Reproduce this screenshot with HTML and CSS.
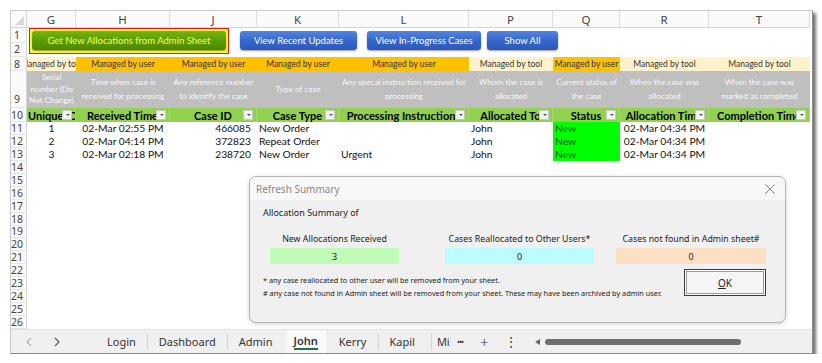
FILE: index.html
```html
<!DOCTYPE HTML>
<html>
<head>
    <meta name="viewport" content="width=device-width, initial-scale=1.0">
    <link rel="stylesheet" href="styles.css">
</head>
<body>
    <div class="window">
        <div class="sheet">
            <div class="corner"><span class="tri"></span></div>
            <div class="ch">G</div>
            <div class="ch">H</div>
            <div class="ch">J</div>
            <div class="ch">K</div>
            <div class="ch">L</div>
            <div class="ch">P</div>
            <div class="ch">Q</div>
            <div class="ch">R</div>
            <div class="ch">T</div>

            <div class="btnbar">
                <div class="hilite"><div class="btn green">Get New Allocations from Admin Sheet</div></div>
                <div class="btn blue b1">View Recent Updates</div>
                <div class="btn blue b2">View In-Progress Cases</div>
                <div class="btn blue b3">Show All</div>
            </div>
            <div class="rh">1</div>
            <div class="rh">2</div>

            <div class="rh">8</div>
            <div class="own tool"><span>Managed by tool</span></div>
            <div class="own user"><span>Managed by user</span></div>
            <div class="own user"><span>Managed by user</span></div>
            <div class="own user"><span>Managed by user</span></div>
            <div class="own user"><span>Managed by user</span></div>
            <div class="own tool"><span>Managed by tool</span></div>
            <div class="own user"><span>Managed by user</span></div>
            <div class="own tool"><span>Managed by tool</span></div>
            <div class="own tool"><span>Managed by tool</span></div>

            <div class="rh bottom">9</div>
            <div class="desc tight">Serial<br>number (Do<br>Not Change)</div>
            <div class="desc">Time when case is received for processing</div>
            <div class="desc">Any reference number to identify the case</div>
            <div class="desc">Type of case</div>
            <div class="desc">Any specal instruction received for processing</div>
            <div class="desc">Whom the case is allocated</div>
            <div class="desc">Current status of the case</div>
            <div class="desc">When the case was allocated</div>
            <div class="desc">When the case was<br>marked as completed</div>

            <div class="rh">10</div>
            <div class="head left"><span>Unique ID</span><i class="filter"></i></div>
            <div class="head"><span>Received Time</span><i class="filter"></i></div>
            <div class="head"><span>Case ID</span><i class="filter"></i></div>
            <div class="head"><span>Case Type</span><i class="filter"></i></div>
            <div class="head"><span>Processing Instructions</span><i class="filter"></i></div>
            <div class="head"><span>Allocated To</span><i class="filter"></i></div>
            <div class="head"><span>Status</span><i class="filter"></i></div>
            <div class="head"><span>Allocation Time</span><i class="filter"></i></div>
            <div class="head"><span>Completion Time</span><i class="filter"></i></div>

            <div class="rh">11</div>
            <div class="c mid">1</div>
            <div class="c mid">02-Mar 02:55 PM</div>
            <div class="c num">466085</div>
            <div class="c">New Order</div>
            <div class="c"></div>
            <div class="c">John</div>
            <div class="c new">New</div>
            <div class="c mid">02-Mar 04:34 PM</div>
            <div class="c"></div>

            <div class="rh">12</div>
            <div class="c mid">2</div>
            <div class="c mid">02-Mar 04:14 PM</div>
            <div class="c num">372823</div>
            <div class="c">Repeat Order</div>
            <div class="c"></div>
            <div class="c">John</div>
            <div class="c new">New</div>
            <div class="c mid">02-Mar 04:34 PM</div>
            <div class="c"></div>

            <div class="rh">13</div>
            <div class="c mid">3</div>
            <div class="c mid">02-Mar 02:18 PM</div>
            <div class="c num">238720</div>
            <div class="c">New Order</div>
            <div class="c">Urgent</div>
            <div class="c">John</div>
            <div class="c new">New</div>
            <div class="c mid">02-Mar 04:34 PM</div>
            <div class="c"></div>

            <div class="rh">14</div><div class="blank"></div>
            <div class="rh">15</div><div class="blank"></div>
            <div class="rh">16</div><div class="blank"></div>
            <div class="rh">17</div><div class="blank"></div>
            <div class="rh">18</div><div class="blank"></div>
            <div class="rh">19</div><div class="blank"></div>
            <div class="rh">20</div><div class="blank"></div>
            <div class="rh">21</div><div class="blank"></div>
            <div class="rh">22</div><div class="blank"></div>
            <div class="rh">23</div><div class="blank"></div>
            <div class="rh">24</div><div class="blank"></div>
            <div class="rh">25</div><div class="blank"></div>
            <div class="rh">26</div><div class="blank"></div>
        </div>

        <div class="tabs">
            <span class="nav prev"><svg width="8" height="10" viewBox="0 0 8 10"><path d="M6 1 L2 5 L6 9" fill="none" stroke="#b0b0b0" stroke-width="1.1"/></svg></span>
            <span class="nav next"><svg width="8" height="10" viewBox="0 0 8 10"><path d="M2 1 L6 5 L2 9" fill="none" stroke="#555" stroke-width="1.1"/></svg></span>
            <span class="tab t-login">Login</span>
            <span class="tab t-dash">Dashboard</span>
            <span class="tab t-admin">Admin</span>
            <span class="tab active"><b>John</b></span>
            <span class="tab t-kerry">Kerry</span>
            <span class="tab t-kapil">Kapil</span>
            <span class="tab t-mike"><span>Mike</span></span>
            <span class="more">&bull;&bull;&bull;</span>
            <span class="plus">+</span>
            <span class="vdots">&#8942;</span>
            <span class="arrow"></span>
            <span class="thumb"></span>
        </div>

        <div class="dialog">
            <div class="title">
                <span>Refresh Summary</span>
                <svg class="close" width="10" height="10" viewBox="0 0 10 10"><path d="M0.5 0.5 L9.5 9.5 M9.5 0.5 L0.5 9.5" stroke="#777" stroke-width="0.9"/></svg>
            </div>
            <div class="dbody">
                <div class="lead">Allocation Summary of</div>
                <div class="stats">
                    <div class="stat s1"><div class="label">New Allocations Received</div><div class="val g">3</div></div>
                    <div class="stat s2"><div class="label">Cases Reallocated to Other Users*</div><div class="val c2">0</div></div>
                    <div class="stat s3"><div class="label">Cases not found in Admin sheet#</div><div class="val o">0</div></div>
                </div>
                <div class="foot">
                    <div class="notes">
                        <p>* any case reallocated to other user will be removed from your sheet.</p>
                        <p># any case not found in Admin sheet will be removed from your sheet. These may have been archived by admin user.</p>
                    </div>
                    <div class="ok"><u>O</u>K</div>
                </div>
            </div>
        </div>
    </div>
</body>
</html>
```

FILE: styles.css
```css
* {
    padding: 0;
    margin: 0;
    box-sizing: border-box;
}
body {
    background: #fff;
    font-family: Lato, "Liberation Sans", sans-serif;
}
.window {
    position: relative;
    margin: 10px 0 0 10px;
    width: 803px;
    height: 344px;
    border: 1px solid #c9c9c9;
    border-right-color: #8a8a8a;
    border-bottom-color: #8a8a8a;
    background: #fff;
    box-shadow: 3px 3px 3px rgba(0, 0, 0, 0.55);
    overflow: hidden;
}
.sheet {
    display: grid;
    grid-template-columns: 16px 49px 94px 87px 82px 130px 84px 67px 89px 101px;
    grid-template-rows: 17px 14.5px 14.5px 14px 37px 14px repeat(16, 12.94px);
    height: 318px;
    overflow: hidden;
}
.corner {
    position: relative;
    border-right: 1px solid #d4d4d4;
    border-bottom: 1px solid #d4d4d4;
    background: #fafafa;
}
.tri {
    position: absolute;
    right: 2px;
    bottom: 2px;
    width: 0;
    height: 0;
    border-left: 9px solid transparent;
    border-bottom: 9px solid #d8d8d8;
}
.ch {
    display: flex;
    align-items: center;
    justify-content: center;
    font-size: 11.5px;
    color: #444;
    background: #fafafa;
    border-right: 1px solid #dedede;
    border-bottom: 1px solid #d4d4d4;
    font-family: "Noto Sans", sans-serif;
}
.rh {
    grid-column: 1;
    display: flex;
    align-items: center;
    justify-content: center;
    padding-right: 3px;
    font-size: 10.5px;
    color: #444;
    background: #fafafa;
    border-right: 1px solid #d4d4d4;
    border-bottom: 1px solid #e6e6e6;
    font-family: "Noto Sans", sans-serif;
}
.rh.bottom {
    align-items: flex-end;
    padding-bottom: 1px;
}

/* floating macro buttons over rows 1-2 */
.btnbar {
    grid-column: 2 / -1;
    grid-row: 2 / span 2;
    display: flex;
    align-items: flex-start;
    padding: 0 0 0 2px;
}
.hilite {
    width: 200px;
    height: 26px;
    border: 1.5px solid #e8141b;
    background: #f7f73c;
    padding: 2px 2px 3px 2px;
}
.btn {
    display: flex;
    align-items: center;
    justify-content: center;
    font-size: 9.5px;
    border-radius: 3px;
    white-space: nowrap;
}
.green {
    height: 100%;
    color: #f4ff4a;
    background: linear-gradient(#74b312, #5a9a05 55%, #4c8800);
    box-shadow: 0 1px 1px rgba(0, 0, 0, 0.35);
}
.blue {
    height: 19px;
    margin-top: 3px;
    color: #fff;
    background: linear-gradient(#5085e3, #3565cb 55%, #2c58b8);
    box-shadow: 0 1px 2px rgba(0, 0, 0, 0.4);
}
.b1 { width: 117px; margin-left: 11px; }
.b2 { width: 114px; margin-left: 10px; }
.b3 { width: 71px; margin-left: 6px; }

/* row 8: who owns the column */
.own {
    display: flex;
    align-items: center;
    justify-content: center;
    overflow: hidden;
    white-space: nowrap;
    font-size: 8.5px;
    color: #333;
}
.own.user { background: #ffc000; }
.own.tool { background: #fff2cc; }

/* row 9: column description */
.desc {
    display: flex;
    align-items: center;
    justify-content: center;
    text-align: center;
    padding: 0 2px;
    background: #bfbfbf;
    color: #f7f7f7;
    font-size: 8.2px;
    line-height: 13.4px;
}
.desc.tight {
    line-height: 11.8px;
    padding: 0;
}

/* row 10: table header */
.head {
    position: relative;
    display: flex;
    align-items: center;
    justify-content: center;
    overflow: hidden;
    white-space: nowrap;
    background: #92d050;
    font-weight: bold;
    font-size: 11px;
    color: #000;
    border-right: 1px solid #a6da70;
}
.head.left {
    justify-content: flex-start;
    padding-left: 1px;
}
.filter {
    position: absolute;
    right: 3px;
    top: 2px;
    width: 10px;
    height: 10px;
    background: #f4f4f4;
    border: 1px solid #c8c8c8;
}
.filter::after {
    content: "";
    position: absolute;
    left: 2.5px;
    top: 3px;
    border-left: 2px solid transparent;
    border-right: 2px solid transparent;
    border-top: 2.5px solid #555;
}

/* data rows */
.c {
    display: flex;
    align-items: center;
    padding-left: 2px;
    white-space: nowrap;
    overflow: visible;
    font-size: 10.3px;
    color: #111;
}
.c.mid { justify-content: center; padding-left: 0; }
.c.num { justify-content: flex-end; padding-right: 6px; }
.c.new {
    background: #00ff00;
    color: #0b5a0b;
}
.blank {
    grid-column: 2 / -1;
}

/* sheet tabs */
.tabs {
    display: flex;
    align-items: center;
    height: 24px;
    background: #f0f0f0;
    border-top: 1px solid #e2e2e2;
    font-family: "Noto Sans", sans-serif;
    font-size: 11px;
    color: #333;
}
.nav {
    display: flex;
    align-items: center;
}
.prev { margin-left: 14px; }
.next { margin-left: 20px; }
.tab {
    display: flex;
    align-items: center;
    height: 16px;
    padding: 0 11px;
    border-left: 1px solid #d6d6d6;
}
.t-login { margin-left: 35px; border-left: none; }
.t-admin { padding-right: 14px; }
.active {
    height: 23px;
    margin-left: 0;
    padding: 0 8px 0 7px;
    background: #fafafa;
    border-left: none;
    position: relative;
}
.active b {
    font-weight: 600;
    border-bottom: 2px solid #217346;
    line-height: 14px;
}
.t-kerry { border-left: none; padding: 0 12px 0 13px; }
.t-kapil { padding: 0 16px 0 10px; }
.t-mike {
    width: 19px;
    overflow: hidden;
    padding: 0 0 0 5px;
    white-space: nowrap;
}
.more {
    font-size: 8px;
    margin-left: 7px;
    letter-spacing: -1px;
}
.plus {
    font-size: 15px;
    margin-left: 17px;
    font-weight: 300;
}
.vdots {
    font-size: 12px;
    margin-left: 17px;
}
.arrow {
    margin-left: 18px;
    width: 0;
    height: 0;
    border-top: 3px solid transparent;
    border-bottom: 3px solid transparent;
    border-right: 5px solid #666;
}
.thumb {
    margin-left: 5px;
    width: 196px;
    height: 6px;
    border-radius: 3px;
    background: #6f6f6f;
}

/* refresh dialog floats over the sheet */
.dialog {
    position: absolute;
    left: 238px;
    top: 165px;
    width: 537px;
    height: 147px;
    border: 1px solid #b5b5b5;
    border-radius: 7px;
    background: #f0f0f0;
    box-shadow: 0 1px 4px rgba(0, 0, 0, 0.18);
    font-family: "Noto Sans", sans-serif;
    color: #222;
    overflow: hidden;
}
.title {
    display: flex;
    align-items: center;
    justify-content: space-between;
    height: 23px;
    padding: 0 10px 0 6px;
    background: #f8f8f8;
    font-size: 10px;
    color: #8a8a8a;
}
.close { margin-top: 1px; }
.dbody {
    padding: 6px 0 0 13px;
}
.lead {
    font-size: 9px;
    line-height: 14px;
}
.stats {
    display: flex;
    margin-top: 12px;
}
.stat {
    display: flex;
    flex-direction: column;
    align-items: center;
}
.s1 { width: 129px; margin-left: 7px; }
.s2 { width: 149px; margin-left: 46px; }
.s3 { width: 150px; margin-left: 22px; }
.label {
    font-size: 8.8px;
    line-height: 14px;
    white-space: nowrap;
}
.val {
    width: 100%;
    height: 16px;
    margin-top: 2px;
    display: flex;
    align-items: center;
    justify-content: center;
    font-size: 9px;
}
.val.g { background: #c0fbb8; }
.val.c2 { background: #bafcff; }
.val.o { background: #fde0c4; }
.foot {
    display: flex;
    align-items: flex-start;
    margin-top: 10px;
}
.notes {
    width: 421px;
    font-size: 7.3px;
    line-height: 13px;
    white-space: nowrap;
}
.ok {
    width: 82px;
    height: 27px;
    display: flex;
    align-items: center;
    justify-content: center;
    font-size: 10px;
    background: #f6f6f6;
    border: 1px solid #3a3a3a;
    box-shadow: inset 0 0 0 1px #fff, inset 0 0 0 2px #9a9a9a;
    margin-top: -5px;
}
```
